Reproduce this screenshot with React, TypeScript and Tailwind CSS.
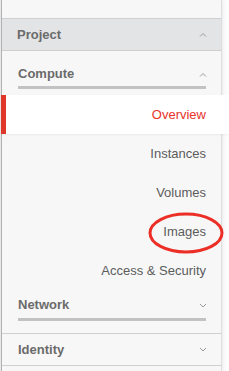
import React from 'react';

function Chevron({ up }: { up?: boolean }) {
  return (
    <svg width="8" height="5" viewBox="0 0 8 5" className="text-[#9a9a9a]">
      <path d={up ? 'M1 4.5 L4 1.5 L7 4.5' : 'M1 1 L4 4 L7 1'} fill="none" stroke="currentColor" strokeWidth="1" />
    </svg>
  );
}

const items = ['Instances', 'Volumes', 'Images', 'Access & Security'];

export default function App() {
  return (
    <div className="relative flex w-[229px] h-[371px] overflow-hidden bg-[#fcfcfc] font-['Liberation_Sans',Arial,sans-serif]">
      {/* page behind, left edge */}
      <div className="w-[2px] h-full bg-[#e9e9e9] border-r border-[#b5b5b5]" />

      <div className="w-[220px] h-full flex flex-col bg-[#f7f7f7] border-r border-[#dedede] shadow-[1px_0_3px_rgba(0,0,0,0.08)]">
        <div className="h-[19px] shrink-0 border-b border-[#cfcfcf]" />

        <div className="h-[32px] shrink-0 flex items-center justify-between pl-[15px] pr-[14px] bg-[#e3e4e5] border-b border-[#cfcfcf]">
          <span className="text-[13px] font-bold text-[#6b6b6b]">Project</span>
          <Chevron up />
        </div>

        {/* Compute */}
        <div className="h-[44px] shrink-0 flex flex-col pl-[16px] pr-[14px] pt-[14px]">
          <div className="flex items-center justify-between">
            <span className="text-[13px] leading-[18px] font-bold text-[#6b6b6b]">Compute</span>
            <Chevron up />
          </div>
          <div className="mt-[3px] h-[3px] mr-[1px] bg-[#c2c2c2]" />
        </div>

        <div className="relative z-10 h-[39px] shrink-0 -mr-[8px] -ml-[1px] flex items-center justify-end pr-[23px] bg-white border-l-[5px] border-[#e0372b] shadow-[0_1px_2px_rgba(0,0,0,0.06)]">
          <span className="text-[13px] text-[#e8342a]">Overview</span>
        </div>

        {items.map(label => (
          <div key={label} className="h-[39px] shrink-0 flex items-center justify-end pr-[15px]">
            <span className="text-[13px] text-[#5c5c5c]">{label}</span>
          </div>
        ))}

        {/* Network */}
        <div className="h-[44px] shrink-0 flex flex-col pl-[16px] pr-[14px] pt-[6px] border-b border-[#cfcfcf]">
          <div className="flex items-center justify-between">
            <span className="text-[13px] leading-[18px] font-bold text-[#6b6b6b]">Network</span>
            <Chevron />
          </div>
          <div className="mt-[4px] h-[3px] mr-[1px] bg-[#c2c2c2]" />
        </div>

        <div className="h-[32px] shrink-0 flex items-center justify-between pl-[16px] pr-[14px] border-b border-[#cfcfcf]">
          <span className="text-[13px] font-bold text-[#6b6b6b]">Identity</span>
          <Chevron />
        </div>
      </div>

      <svg className="absolute left-[148px] top-[212px]" width="76" height="42" viewBox="0 0 76 42">
        <ellipse cx="38" cy="21" rx="36" ry="19" fill="none" stroke="#ec2f26" strokeWidth="3" />
      </svg>
    </div>
  );
}
